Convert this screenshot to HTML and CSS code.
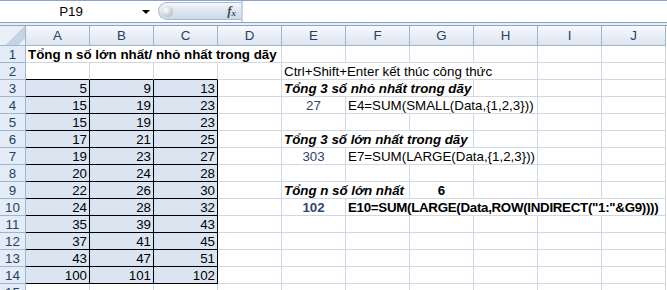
FILE: index.html
```html
<!DOCTYPE html>
<html lang="vi">
<head>
    <meta charset="UTF-8">
    <title>Tổng n số lớn nhất</title>
    <link rel="stylesheet" href="styles.css">
</head>
<body>
    <div class="formula-bar">
        <div class="name-box">
            <span class="name">P19</span>
            <span class="drop"></span>
        </div>
        <div class="fx-pill">
            <span class="knob"></span>
            <span class="fx">f<sub>x</sub></span>
        </div>
        <div class="formula-input"></div>
    </div>
    <div class="bar-gap"></div>

    <div class="sheet">
        <div class="row head">
            <div class="corner"></div>
            <div class="col">A</div><div class="col">B</div><div class="col">C</div><div class="col">D</div><div class="col">E</div>
            <div class="col">F</div><div class="col">G</div><div class="col">H</div><div class="col">I</div><div class="col">J</div>
        </div>

        <div class="row">
            <div class="rh">1</div>
            <div class="c s4 b">Tổng n số lớn nhất/ nhỏ nhất trong dãy</div>
            <div class="c"></div><div class="c"></div><div class="c"></div><div class="c"></div><div class="c"></div><div class="c"></div>
        </div>
        <div class="row">
            <div class="rh">2</div>
            <div class="c edge"></div><div class="c edge"></div><div class="c edge"></div><div class="c"></div>
            <div class="c s4">Ctrl+Shift+Enter kết thúc công thức</div>
            <div class="c"></div><div class="c"></div>
        </div>
        <div class="row">
            <div class="rh">3</div>
            <div class="c d">5</div><div class="c d">9</div><div class="c d">13</div><div class="c"></div>
            <div class="c s3 bi">Tổng 3 số nhỏ nhất trong dãy</div>
            <div class="c"></div><div class="c"></div><div class="c"></div>
        </div>
        <div class="row">
            <div class="rh">4</div>
            <div class="c d">15</div><div class="c d">19</div><div class="c d">23</div><div class="c"></div>
            <div class="c res">27</div>
            <div class="c s3">E4=SUM(SMALL(Data,{1,2,3}))</div>
            <div class="c"></div><div class="c"></div>
        </div>
        <div class="row">
            <div class="rh">5</div>
            <div class="c d">15</div><div class="c d">19</div><div class="c d">23</div>
            <div class="c"></div><div class="c"></div><div class="c"></div><div class="c"></div><div class="c"></div><div class="c"></div><div class="c"></div>
        </div>
        <div class="row">
            <div class="rh">6</div>
            <div class="c d">17</div><div class="c d">21</div><div class="c d">25</div><div class="c"></div>
            <div class="c s3 bi">Tổng 3 số lớn nhất trong dãy</div>
            <div class="c"></div><div class="c"></div><div class="c"></div>
        </div>
        <div class="row">
            <div class="rh">7</div>
            <div class="c d">19</div><div class="c d">23</div><div class="c d">27</div><div class="c"></div>
            <div class="c res">303</div>
            <div class="c s3">E7=SUM(LARGE(Data,{1,2,3}))</div>
            <div class="c"></div><div class="c"></div>
        </div>
        <div class="row">
            <div class="rh">8</div>
            <div class="c d">20</div><div class="c d">24</div><div class="c d">28</div>
            <div class="c"></div><div class="c"></div><div class="c"></div><div class="c"></div><div class="c"></div><div class="c"></div><div class="c"></div>
        </div>
        <div class="row">
            <div class="rh">9</div>
            <div class="c d">22</div><div class="c d">26</div><div class="c d">30</div><div class="c"></div>
            <div class="c s2 bi">Tổng n số lớn nhất</div>
            <div class="c mid b">6</div>
            <div class="c"></div><div class="c"></div><div class="c"></div>
        </div>
        <div class="row">
            <div class="rh">10</div>
            <div class="c d">24</div><div class="c d">28</div><div class="c d">32</div><div class="c"></div>
            <div class="c res b">102</div>
            <div class="c s5 b tight">E10=SUM(LARGE(Data,ROW(INDIRECT("1:"&amp;G9))))</div>
        </div>
        <div class="row">
            <div class="rh">11</div>
            <div class="c d">35</div><div class="c d">39</div><div class="c d">43</div>
            <div class="c"></div><div class="c"></div><div class="c"></div><div class="c"></div><div class="c"></div><div class="c"></div><div class="c"></div>
        </div>
        <div class="row">
            <div class="rh">12</div>
            <div class="c d">37</div><div class="c d">41</div><div class="c d">45</div>
            <div class="c"></div><div class="c"></div><div class="c"></div><div class="c"></div><div class="c"></div><div class="c"></div><div class="c"></div>
        </div>
        <div class="row">
            <div class="rh">13</div>
            <div class="c d">43</div><div class="c d">47</div><div class="c d">51</div>
            <div class="c"></div><div class="c"></div><div class="c"></div><div class="c"></div><div class="c"></div><div class="c"></div><div class="c"></div>
        </div>
        <div class="row">
            <div class="rh">14</div>
            <div class="c d">100</div><div class="c d">101</div><div class="c d">102</div>
            <div class="c"></div><div class="c"></div><div class="c"></div><div class="c"></div><div class="c"></div><div class="c"></div><div class="c"></div>
        </div>
        <div class="row">
            <div class="rh">15</div>
            <div class="c"></div><div class="c"></div><div class="c"></div><div class="c"></div><div class="c"></div>
            <div class="c"></div><div class="c"></div><div class="c"></div><div class="c"></div><div class="c"></div>
        </div>
    </div>
</body>
</html>
```

FILE: styles.css
```css
body {
    margin: 0;
    width: 667px;
    height: 290px;
    overflow: hidden;
    background: #fff;
    font-family: "Liberation Sans", Arial, sans-serif;
    font-size: 13.33px;
    color: #000;
}
.formula-bar {
    display: flex;
    height: 23px;
    box-sizing: border-box;
    border-top: 1px solid #8ba4c3;
    border-bottom: 1px solid #8ba4c3;
    background: #fff;
}
.name-box {
    width: 158px;
    display: flex;
    align-items: center;
    background: #fff;
}
.name {
    width: 142px;
    text-align: center;
    color: #000;
}
.drop {
    width: 0;
    height: 0;
    border-left: 4px solid transparent;
    border-right: 4px solid transparent;
    border-top: 4px solid #000;
    margin-top: 1px;
}
.fx-pill {
    width: 83px;
    height: 18px;
    margin-top: 1px;
    box-sizing: border-box;
    border: 1px solid #a7b9d1;
    border-right: none;
    border-radius: 10px 0 0 10px;
    background: linear-gradient(#f4f7fb, #dbe4f0 55%, #cdd9e9);
    display: flex;
    align-items: center;
    justify-content: space-between;
    padding: 0 5px 0 3px;
}
.knob {
    width: 11px;
    height: 11px;
    border-radius: 50%;
    background: radial-gradient(circle at 35% 35%, #ffffff, #c9ced6 60%, #9aa3af);
}
.fx {
    font-family: "Liberation Serif", serif;
    font-style: italic;
    font-weight: bold;
    font-size: 13px;
    color: #4a4a4a;
}
.fx sub {
    font-size: 9px;
    vertical-align: -1px;
}
.formula-input {
    flex: 1;
    border-left: 2px solid #c5d3e6;
    background: #fff;
}
.bar-gap {
    height: 2px;
    background: #e7eef7;
    border-bottom: 1px solid #8ba4c3;
}

.row {
    display: grid;
    grid-template-columns: 26px repeat(10, 64px) 1fr;
    grid-template-rows: 17px;
    height: 17px;
}
.row.head {
    grid-template-rows: 20px;
    height: 20px;
}
.corner {
    box-sizing: border-box;
    border-right: 1px solid #9eb6ce;
    border-bottom: 1px solid #9eb6ce;
    background: linear-gradient(135deg, #e9eff7 55%, #c6d3e3 55%, #c6d3e3 85%, #e9eff7 85%);
}
.col {
    box-sizing: border-box;
    border-right: 1px solid #9eb6ce;
    border-bottom: 1px solid #9eb6ce;
    background: linear-gradient(#f8fafd, #e6edf6 60%, #dbe4f0);
    color: #27415f;
    text-align: center;
    line-height: 19px;
}
.rh {
    box-sizing: border-box;
    border-right: 1px solid #9eb6ce;
    border-bottom: 1px solid #9eb6ce;
    background: #e4ecf7;
    color: #27415f;
    text-align: center;
    line-height: 17px;
}
.c {
    box-sizing: border-box;
    border-right: 1px solid #d0d7e5;
    border-bottom: 1px solid #d0d7e5;
    padding: 0 2px;
    line-height: 17px;
    white-space: nowrap;
    overflow: hidden;
}
.s2 { grid-column: span 2; }
.s3 { grid-column: span 3; }
.s4 { grid-column: span 4; }
.s5 { grid-column: span 5; }
.b { font-weight: bold; }
.bi {
    font-weight: bold;
    font-style: italic;
}
.tight { letter-spacing: -0.3px; }
.mid { text-align: center; }
.row .edge { border-bottom: 1px solid #000; }
.row .d {
    background: #dbe5f1;
    border-right: 1px solid #000;
    border-bottom: 1px solid #000;
    text-align: right;
}
.res {
    text-align: center;
    color: #35446e;
}
```
